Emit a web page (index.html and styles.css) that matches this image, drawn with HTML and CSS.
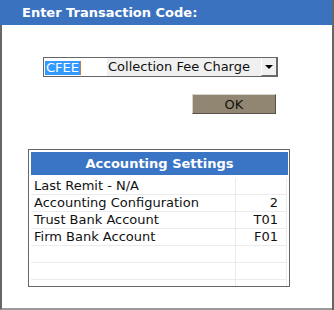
FILE: index.html
```html
<!DOCTYPE html>
<html lang="en">
<head>
    <meta charset="UTF-8">
    <title>Enter Transaction Code</title>
    <link rel="stylesheet" href="styles.css">
</head>
<body>
    <div class="window">
        <div class="title-bar">Enter Transaction Code:</div>
        <div class="content">
            <div class="combo">
                <div class="combo-code"><span class="selected">CFEE</span></div>
                <div class="combo-desc">Collection Fee Charge</div>
                <div class="combo-btn"><span class="arrow"></span></div>
            </div>

            <div class="ok-row">
                <button class="ok-btn">OK</button>
            </div>

            <div class="settings">
                <div class="settings-header">Accounting Settings</div>
                <table class="settings-table">
                    <tr><td class="label">Last Remit - N/A</td><td class="value"></td></tr>
                    <tr><td class="label">Accounting Configuration</td><td class="value">2</td></tr>
                    <tr><td class="label">Trust Bank Account</td><td class="value">T01</td></tr>
                    <tr><td class="label">Firm Bank Account</td><td class="value">F01</td></tr>
                    <tr><td class="label"></td><td class="value"></td></tr>
                    <tr><td class="label"></td><td class="value"></td></tr>
                    <tr><td class="label"></td><td class="value"></td></tr>
                </table>
            </div>
        </div>
    </div>
</body>
</html>
```

FILE: styles.css
```css
body {
    margin: 0;
    font-family: "DejaVu Sans", Verdana, sans-serif;
    font-size: 13px;
    color: #111;
    background: #fff;
}

.window {
    width: 334px;
    height: 310px;
    box-sizing: border-box;
    border-right: 2px solid #666;
    display: flex;
    flex-direction: column;
}

.title-bar {
    height: 25px;
    box-sizing: border-box;
    padding: 1px 0 0 22px;
    line-height: 24px;
    background: #3b72c0;
    color: #fff;
    font-weight: bold;
}

.content {
    flex: 1;
    border-left: 2px solid #666;
    border-bottom: 2px solid #999;
}

/* combo box */
.combo {
    display: flex;
    width: 235px;
    height: 20px;
    box-sizing: border-box;
    margin: 32px 0 0 41px;
    border: 1px solid #666;
}

.combo-code {
    width: 63px;
    background: #fff;
    padding: 2px 0 0 1px;
    box-sizing: border-box;
}

.selected {
    display: inline-block;
    height: 14px;
    line-height: 14px;
    padding: 0 1px;
    background: #3399ff;
    color: #fff;
    border-right: 1px solid #c0803a;
}

.combo-desc {
    flex: 1;
    background: #f0f0f0;
    line-height: 18px;
    padding-left: 1px;
}

.combo-btn {
    width: 16px;
    box-sizing: border-box;
    background: #f0f0f0;
    border-left: 1px solid #fff;
    border-right: 1px solid #6a6a6a;
    border-bottom: 1px solid #6a6a6a;
    display: flex;
    align-items: center;
    justify-content: center;
}

.arrow {
    width: 0;
    height: 0;
    border-left: 4px solid transparent;
    border-right: 4px solid transparent;
    border-top: 4px solid #000;
}

/* OK button */
.ok-row {
    width: 235px;
    margin: 17px 0 0 41px;
    display: flex;
    justify-content: flex-end;
}

.ok-btn {
    width: 84px;
    height: 20px;
    margin-right: 2px;
    padding: 0;
    background: #918672;
    border: 1px solid;
    border-color: #d8d4cc #5a5248 #5a5248 #d8d4cc;
    font-family: inherit;
    font-size: 13px;
    color: #111;
}

/* settings panel */
.settings {
    width: 262px;
    height: 138px;
    box-sizing: border-box;
    margin: 35px 0 0 26px;
    padding: 2px 1px 0 2px;
    border: 1px solid #666;
    overflow: hidden;
}

.settings-header {
    height: 23px;
    line-height: 24px;
    background: #3a74c4;
    color: #fff;
    font-weight: bold;
    text-align: center;
    border-bottom: 3px solid #fff;
}

.settings-table {
    width: 256px;
    border-collapse: collapse;
}

.settings-table td {
    height: 16px;
    padding: 0;
    line-height: 16px;
    border-bottom: 1px solid #ebebeb;
    border-right: 1px solid #ebebeb;
    white-space: nowrap;
}

.settings-table .label {
    width: 201px;
    padding-left: 3px;
}

.settings-table .value {
    text-align: right;
    padding-right: 8px;
}
```
